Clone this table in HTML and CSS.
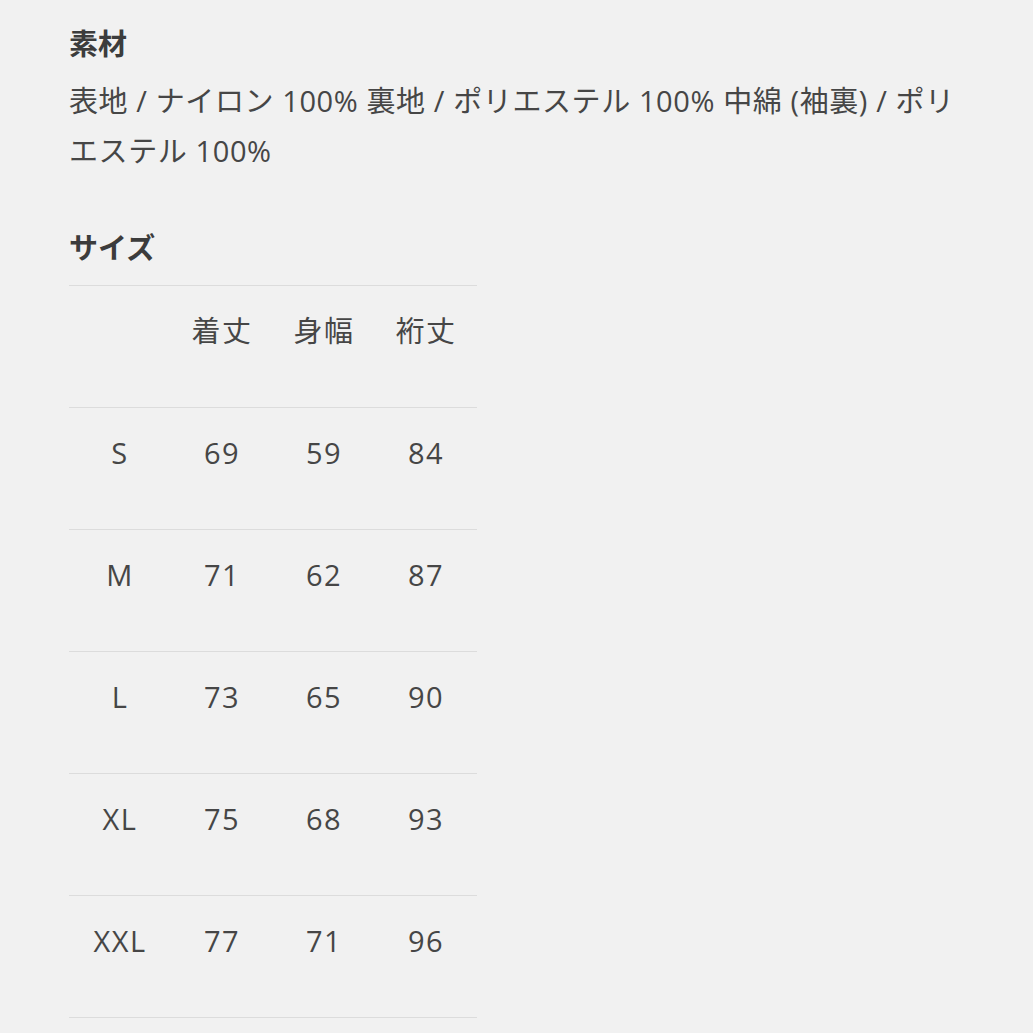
FILE: index.html
```html
<!DOCTYPE html>
<html lang="ja">
<head>
<meta charset="utf-8">
<link rel="stylesheet" href="styles.css">
</head>
<body>
<main class="page">
  <h2 class="heading heading-first">素材</h2>
  <p class="material">表地 / ナイロン 100% 裏地 / ポリエステル 100% 中綿 (袖裏) / ポリエステル 100%</p>
  <h2 class="heading heading-size">サイズ</h2>
  <table class="size-table">
    <tr><th></th><th>着丈</th><th>身幅</th><th>裄丈</th></tr>
    <tr><td>S</td><td>69</td><td>59</td><td>84</td></tr>
    <tr><td>M</td><td>71</td><td>62</td><td>87</td></tr>
    <tr><td>L</td><td>73</td><td>65</td><td>90</td></tr>
    <tr><td>XL</td><td>75</td><td>68</td><td>93</td></tr>
    <tr><td>XXL</td><td>77</td><td>71</td><td>96</td></tr>
  </table>
</main>
</body>
</html>
```
FILE: styles.css
```css
html, body {
  margin: 0;
  padding: 0;
  background: #f1f1f1;
}
body {
  font-family: "Open Sans", "Noto Sans CJK JP", sans-serif;
  color: #464646;
}
.page {
  padding: 24px 0 0 69px;
  width: 895px;
}
.heading {
  margin: 0;
  font-size: 29px;
  line-height: 40px;
  font-weight: 700;
  color: #3c3c3c;
}
.material {
  margin: 12px 0 0;
  font-size: 29px;
  line-height: 50px;
  font-weight: 400;
  letter-spacing: 0.6px;
}
.heading-size {
  margin-top: 52px;
}
.size-table {
  margin-top: 17px;
  border-collapse: collapse;
  width: 408px;
  table-layout: fixed;
}
.size-table tr {
  border-top: 1px solid #dcdcdc;
  border-bottom: 1px solid #dcdcdc;
}
.size-table th,
.size-table td {
  width: 102px;
  padding: 29px 0 60px;
  font-size: 29px;
  line-height: 32px;
  font-weight: 400;
  letter-spacing: 1.5px;
  text-align: center;
  vertical-align: top;
}
```
